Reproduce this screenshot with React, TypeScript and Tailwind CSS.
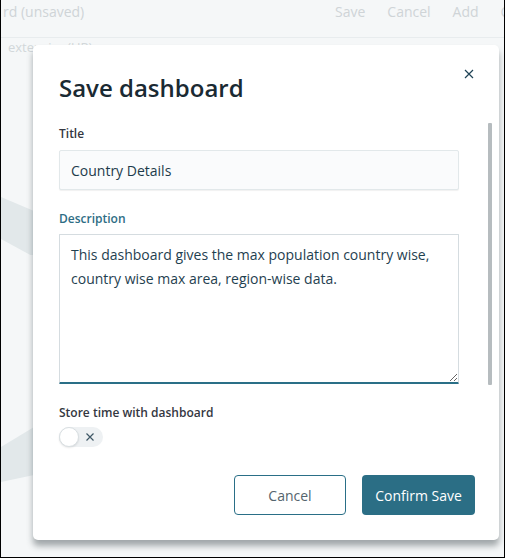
import React, { useState } from 'react';

const font = { fontFamily: '"Open Sans", "Noto Sans", sans-serif' };

const SaveDashboardModal: React.FC = () => {
  const [title, setTitle] = useState<string>('Country Details');
  const [description, setDescription] = useState<string>(
    'This dashboard gives the max population country wise, country wise max area, region-wise data.',
  );
  const [storeTime, setStoreTime] = useState<boolean>(false);

  return (
    <div className="absolute left-[32px] top-[45px] w-[466px] h-[495px] bg-white rounded-[5px] shadow-[0_6px_6px_rgba(60,70,75,0.45)] flex flex-col px-[26px] pt-[27px] pb-[25px]">
      <div className="flex items-start justify-between">
        <h2 className="text-[24px] leading-[32px] font-semibold text-[#1a2a33]">
          Save dashboard
        </h2>
        <button className="mt-[-6px] mr-[-4px] w-[16px] h-[16px] flex items-center justify-center text-[#1f4356]">
          <svg width="10" height="10" viewBox="0 0 10 10" fill="none">
            <path d="M1 1L9 9M9 1L1 9" stroke="currentColor" strokeWidth="1.2" />
          </svg>
        </button>
      </div>

      {/* scroll thumb */}
      <div className="absolute left-[455px] top-[78px] w-[4px] h-[262px] bg-[#b6bcbf] rounded-[1px]" />

      <div className="flex flex-col w-[400px] mt-[22px]">
        <label className="text-[12px] leading-[16px] font-semibold text-[#343741] mb-[8px]">
          Title
        </label>
        <input
          value={title}
          onChange={(e) => setTitle(e.target.value)}
          className="h-[40px] px-[11px] text-[14px] text-[#1d3b4b] bg-[#fafbfc] border border-[#e2e8ea] rounded-[2px] shadow-[0_1px_1px_rgba(0,0,0,0.06)] outline-none"
        />

        <label className="mt-[21px] text-[12px] leading-[16px] font-semibold text-[#2e6d84] mb-[7px]">
          Description
        </label>
        <textarea
          value={description}
          onChange={(e) => setDescription(e.target.value)}
          className="h-[150px] px-[11px] py-[8px] text-[14px] leading-[24px] text-[#1f4150] bg-white border border-[#d5dce0] border-b-2 border-b-[#2a6f87] rounded-[1px] outline-none resize-y"
        />

        <label className="mt-[21px] text-[12px] leading-[16px] font-semibold text-[#343741]">
          Store time with dashboard
        </label>
        <button
          onClick={() => setStoreTime(!storeTime)}
          className="mt-[6px] relative w-[44px] h-[20px] rounded-full bg-[#eef1f3] flex items-center"
        >
          <span className="w-[20px] h-[20px] rounded-full bg-white border border-[#d9dfe2] shadow-[0_1px_2px_rgba(0,0,0,0.1)]" />
          <svg className="ml-[6px]" width="10" height="10" viewBox="0 0 10 10" fill="none">
            <path d="M1.5 1.5L8.5 8.5M8.5 1.5L1.5 8.5" stroke="#3f5866" strokeWidth="1.2" />
          </svg>
        </button>
      </div>

      <div className="mt-auto flex justify-end gap-[16px] mr-[-2px]">
        <button className="w-[112px] h-[40px] rounded-[4px] border border-[#2a6f87] bg-white text-[14px] text-[#55646d]">
          Cancel
        </button>
        <button className="w-[113px] h-[40px] rounded-[4px] bg-[#2b6e85] text-[14px] text-white">
          Confirm Save
        </button>
      </div>
    </div>
  );
};

const App: React.FC = () => {
  return (
    <div
      className="relative w-[505px] h-[558px] overflow-hidden bg-[#f5f7f8] border-x border-b border-black"
      style={font}
    >
      {/* faded page behind the modal */}
      <div className="grid grid-cols-[334px_1fr] h-[38px] pt-[2px] border-b border-[#e8ecee] text-[14px] leading-[20px] text-[#cfd4d7]">
        <span className="ml-[2px]">rd (unsaved)</span>
        <div className="flex gap-[22px] whitespace-nowrap">
          <span>Save</span>
          <span>Cancel</span>
          <span>Add</span>
          <span>C</span>
        </div>
      </div>
      <div className="px-[7px] pt-[1px] text-[13px] leading-[16px] text-[#d2d7da]">extension(UP)</div>
      <div className="mt-[140px]">
        <svg width="33" height="60" viewBox="0 0 33 60">
          <path d="M0 2 L33 16 L33 62 L0 44 Z" fill="#e2e8ea" />
        </svg>
      </div>
      <div className="mt-[172px]">
        <svg width="33" height="60" viewBox="0 0 33 60">
          <path d="M0 20 L33 0 L33 48 L0 55 Z" fill="#e2e8ea" />
        </svg>
      </div>

      <SaveDashboardModal />
    </div>
  );
};

export default App;
